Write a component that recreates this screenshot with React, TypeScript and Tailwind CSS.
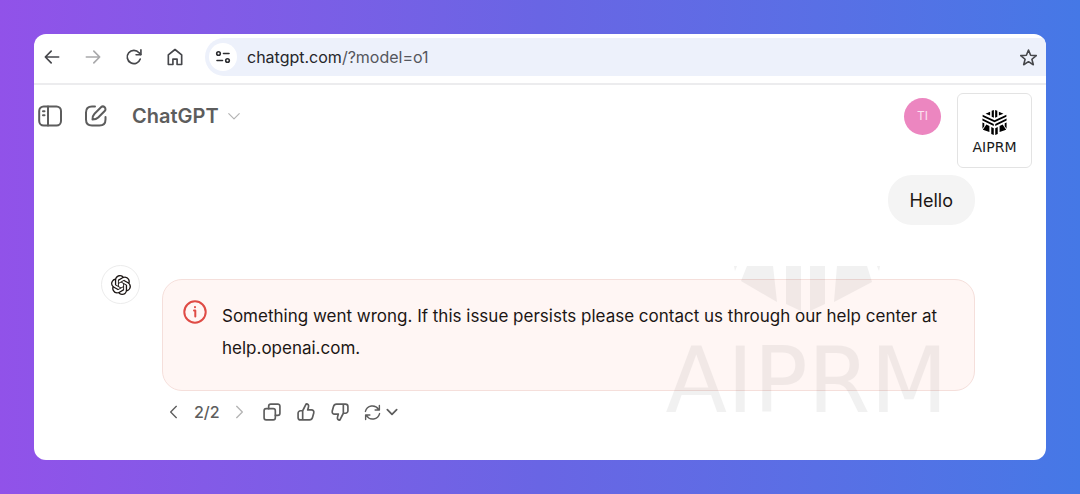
import React from "react";
import { SiOpenai } from "react-icons/si";

// ============================================================================
// ICONS
// ============================================================================

interface IconProps {
  className?: string;
  children: React.ReactNode;
  viewBox?: string;
  strokeWidth?: number;
}

function Icon({
  className = "size-5",
  children,
  viewBox = "0 0 24 24",
  strokeWidth = 2,
}: IconProps) {
  return (
    <svg
      className={`shrink-0 ${className}`}
      viewBox={viewBox}
      fill="none"
      stroke="currentColor"
      strokeWidth={strokeWidth}
      strokeLinecap="round"
      strokeLinejoin="round"
      aria-hidden="true"
    >
      {children}
    </svg>
  );
}

function AiprmMark({ className }: { className: string }) {
  return (
    <svg className={className} viewBox="0 0 24 24" fill="currentColor" aria-hidden="true">
      {/* top face */}
      <path d="M9.300.8 11.400 0V7.500L9.300 6.500zM12.600 0l2.100.8v5.700l-2.100 1z" />
      <path d="M7.800 1.600v3.700L3.400 3.700zM16.200 1.600v3.700l4.400-1.600z" />
      {/* chevron bands */}
      <path d="M.6 4.600 12 9.900l11.400-5.300v1.900L12 11.800.6 6.500z" />
      <path d="M.4 8.200 11.300 13.500v1.900L.4 10.100zM23.600 8.200 12.700 13.500v1.900L23.600 10.100z" />
      {/* side faces */}
      <path d="M.4 11.900 2.200 12.800v2.900L.4 18zM23.600 11.900l-1.800.9v2.900l1.800 2.300z" />
      <path d="M4.200 14 7.100 15.400v5.800L.8 19zM19.800 14l-2.900 1.400v5.800l6.300-2.200z" />
      <path d="M8.900 16.200 11.300 17.400v6.600L8.900 23zM15.100 16.200l-2.400 1.200v6.600l2.400-1z" />
    </svg>
  );
}

// ============================================================================
// BROWSER TOOLBAR
// ============================================================================

function BrowserToolbar() {
  return (
    <div className="flex items-center border-b-2 border-[#ececee] pt-1 pb-[7px] pl-2 text-[#46474b]">
      <div className="flex items-center gap-[21px]">
        <button type="button" aria-label="Back">
          <Icon>
            <path d="M20 12H4M11 5l-7 7 7 7" />
          </Icon>
        </button>
        <button type="button" aria-label="Forward" className="text-[#a9a9ab]">
          <Icon>
            <path d="M4 12h16M13 5l7 7-7 7" />
          </Icon>
        </button>
        <button type="button" aria-label="Reload">
          <Icon>
            <path d="M19.500 14.500A8 8 0 1 1 18 6.800L20 9" />
            <path d="M20.300 3.500V9.300H14.500" />
          </Icon>
        </button>
        <button type="button" aria-label="Home">
          <Icon>
            <path d="M4 21V9.500L12 3l8 6.500V21h-5.500v-6.500h-5V21z" />
          </Icon>
        </button>
      </div>

      <div className="ml-5 flex h-[38px] min-w-0 flex-1 items-center rounded-l-full bg-[#edf1fb] pr-2 pl-1">
        <button
          type="button"
          aria-label="Site information"
          className="flex size-7 shrink-0 items-center justify-center rounded-full bg-white text-[#2c2d30]"
        >
          <Icon className="size-4" viewBox="0 0 16 16" strokeWidth={1.6}>
            <circle cx="3.500" cy="4.500" r="1.800" />
            <path d="M8.500 4.500H14M2 11.500h5.500" />
            <circle cx="12.500" cy="11.500" r="1.800" />
          </Icon>
        </button>
        <a href="#" className="ml-2.5 flex-1 truncate text-base text-[#25262a]">
          chatgpt.com<span className="text-[#55575d]">/?model=o1</span>
        </a>
        <button type="button" aria-label="Bookmark this tab">
          <Icon className="size-[19px]">
            <path d="m12 2.500 2.700 6.600 7.100.5-5.500 4.600 1.800 6.900-6.100-3.800-6.100 3.800 1.800-6.900L2.200 9.600l7.100-.5z" />
          </Icon>
        </button>
      </div>
    </div>
  );
}

// ============================================================================
// CHAT HEADER
// ============================================================================

function ChatHeader() {
  return (
    <header className="flex items-start pt-2 pr-3.5 pl-1 text-[#5d5d5d]">
      <div className="flex h-[46px] flex-1 items-center">
        <button type="button" aria-label="Open sidebar">
          <Icon className="size-6">
            <rect x="1.200" y="2.500" width="21.800" height="19" rx="4.500" />
            <path d="M10 2.500v19" />
            <path d="M5 7.300h1.500M5 11.300h1.500" />
          </Icon>
        </button>
        <button type="button" aria-label="New chat" className="ml-[22px]">
          <Icon className="size-6">
            <path d="M11 2.500H8C4 2.500 2 4.500 2 8.500v7c0 4 2 6 6 6h7.500c4 0 6-2 6-6V13" />
            <path d="M8.500 15.500c0-3 .5-4.200 2-5.700l6.500-6.500a2.500 2.500 0 0 1 3.700 3.700l-6.500 6.500c-1.500 1.500-2.700 2-5.700 2z" />
          </Icon>
        </button>
        <button type="button" className="ml-6 flex items-center gap-2 text-xl font-semibold">
          ChatGPT
          <Icon className="size-3.5 text-[#b4b4b4]">
            <path d="m3 8 9 9 9-9" />
          </Icon>
        </button>
      </div>
      <div className="flex items-start gap-4">
        <div className="flex h-[46px] items-center">
          <button
            type="button"
            className="flex size-[37px] items-center justify-center rounded-full bg-[#ec86c0] text-xs text-[#fbe3f1]"
          >
            TI
          </button>
        </div>
        <button
          type="button"
          className="flex size-[75px] flex-col items-center justify-center gap-0.5 rounded-md border border-[#e3e3e3] bg-white pt-1.5 font-['DejaVu_Sans',sans-serif] text-sm text-[#1b1b1b]"
        >
          <AiprmMark className="size-[25px] text-black" />
          AIPRM
        </button>
      </div>
    </header>
  );
}

// ============================================================================
// MESSAGES
// ============================================================================

function MessageActions() {
  return (
    <div className="mt-[11px] flex items-center pl-1 text-[#5d5d5d]">
      <button type="button" aria-label="Previous response">
        <Icon className="size-4">
          <path d="m15.500 3.500-8.500 8.500 8.500 8.500" />
        </Icon>
      </button>
      <span className="mx-3 text-base leading-5 font-medium">2/2</span>
      <button type="button" aria-label="Next response" className="text-[#b4b4b4]">
        <Icon className="size-4">
          <path d="m7 3.500 8.500 8.500L7 20.500" />
        </Icon>
      </button>
      <div className="ml-3.5 flex items-center gap-3.5">
        <button type="button" aria-label="Copy">
          <Icon>
            <rect x="2.500" y="8" width="13.500" height="13.500" rx="2.500" />
            <path d="M8 8V5a2.500 2.500 0 0 1 2.500-2.500H19A2.500 2.500 0 0 1 21.500 5v8.500A2.500 2.500 0 0 1 19 16h-3" />
          </Icon>
        </button>
        <button type="button" aria-label="Good response">
          <Icon>
            <path d="M8 10.500 12.200 2.300c2.500 0 3.300 1.500 2.800 3.500L14 9.500h4.500c2.200 0 3.300 1.700 2.800 3.700l-1.500 5.500c-.5 1.900-1.700 2.800-3.600 2.800H5.500a3 3 0 0 1-3-3v-5a3 3 0 0 1 3-3zM8 10.500v11" />
          </Icon>
        </button>
        <button type="button" aria-label="Bad response">
          <Icon className="size-5 rotate-180">
            <path d="M8 10.500 12.200 2.300c2.500 0 3.300 1.500 2.800 3.500L14 9.500h4.500c2.200 0 3.300 1.700 2.800 3.700l-1.500 5.500c-.5 1.900-1.700 2.800-3.600 2.800H5.500a3 3 0 0 1-3-3v-5a3 3 0 0 1 3-3zM8 10.500v11" />
          </Icon>
        </button>
        <button type="button" aria-label="Regenerate" className="flex items-center gap-1">
          <Icon className="size-[17px]">
            <path d="M2 10.500A10.200 10.200 0 0 1 20.500 7.500M21.700 2v6.500h-6" />
            <path d="M22 13.500A10.200 10.200 0 0 1 3.500 16.500M2.300 22v-6.500h6" />
          </Icon>
          <Icon className="size-3.5" strokeWidth={3}>
            <path d="m4 8 8 8 8-8" />
          </Icon>
        </button>
      </div>
    </div>
  );
}

function Watermark() {
  return (
    <div className="pointer-events-none absolute top-[91px] right-[98px] flex flex-col items-center text-black opacity-5">
      <svg className="h-[45px] w-[146px]" viewBox="0 0 146 45" fill="currentColor" aria-hidden="true">
        <path d="M0 0h3L1 5zM146 0h-3l2 5z" />
        <path d="M13 0h26l4 36L7 15zM133 0h-30l-3 36 38-20z" />
        <path d="M52 0h15v45l-15-7zM76 0h15v38l-15 7z" />
      </svg>
      <span className="mt-5 font-['DejaVu_Sans',sans-serif] text-[90px] leading-[100px]">
        AIPRM
      </span>
    </div>
  );
}

function Conversation() {
  return (
    <main className="relative mt-[7px] flex-1 pr-[71px] pb-8 pl-[67px] text-[#1c1614]">
      <div className="flex justify-end">
        <p className="rounded-3xl bg-[#f4f4f4] px-[22px] pt-2.5 pb-2 text-lg leading-8">Hello</p>
      </div>

      <div className="mt-10 flex items-start gap-[22px]">
        <div className="flex size-[39px] shrink-0 items-center justify-center rounded-full border border-[#ececec]">
          <SiOpenai className="size-5" />
        </div>
        <div className="min-w-0 flex-1 pt-3.5">
          <div
            role="alert"
            className="flex items-start gap-[15px] rounded-[20px] border border-[#f5dfdb] bg-[#fff6f4] pt-5 pr-4 pb-[26px] pl-5"
          >
            <Icon className="size-6 text-[#df4b45]">
              <circle cx="12" cy="12" r="10.700" />
              <path d="M11 10.500h1.300v6M12 7v.2" />
            </Icon>
            <p className="text-[17px] leading-8">
              Something went wrong. If this issue persists please contact us through our help
              center at help.openai.com.
            </p>
          </div>
          <MessageActions />
        </div>
      </div>
      <Watermark />
    </main>
  );
}

// ============================================================================
// APP
// ============================================================================

export default function App() {
  return (
    <div className="flex min-h-screen bg-linear-to-r from-[#9152e9] via-[#6965e4] to-[#4578e6] p-[34px] font-[Inter,sans-serif]">
      <div className="flex min-w-0 flex-1 flex-col overflow-hidden rounded-xl bg-white">
        <BrowserToolbar />
        <ChatHeader />
        <Conversation />
      </div>
    </div>
  );
}
